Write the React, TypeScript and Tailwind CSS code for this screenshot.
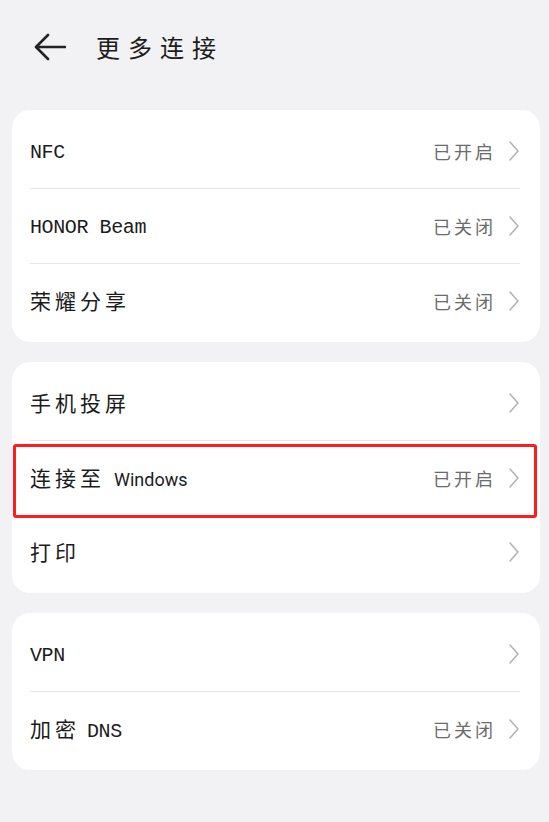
import React from 'react';

const mono = '"Liberation Mono", "Noto Sans CJK SC", monospace';

function Chevron() {
  return (
    <svg width="12" height="22" viewBox="0 0 12 22" fill="none" className="shrink-0">
      <path d="M2 2 L10 11 L2 20" stroke="#b4b4b4" strokeWidth="1.6" strokeLinecap="round" strokeLinejoin="round" />
    </svg>
  );
}

// Chinese runs get extra spacing, latin runs keep tight monospace
function Zh({ children }: { children: React.ReactNode }) {
  return <span className="text-[21px] tracking-[4px]">{children}</span>;
}

type Item = { label: React.ReactNode; status?: string; highlight?: boolean };

function Row({ item, divider }: { item: Item; divider: boolean }) {
  return (
    <div className="relative">
      <div className="flex h-[74px] items-center justify-between pl-[18px] pr-[20px]">
        <span className="pt-[4px] text-[20px] leading-none tracking-[-0.4px] text-[#1c1c1c]" style={{ fontFamily: mono }}>
          {item.label}
        </span>
        <div className="flex items-center gap-[12px]">
          {item.status && (
            <span className="text-[18px] leading-none tracking-[3px] text-[#6b6b6b]" style={{ fontFamily: '"Noto Sans CJK SC", sans-serif' }}>
              {item.status}
            </span>
          )}
          <Chevron />
        </div>
      </div>
      {divider && <div className="ml-[18px] mr-[20px] h-px bg-[#e6e6e6]" />}
      {item.highlight && (
        <div className="pointer-events-none absolute left-[1px] right-[3px] top-[3px] -bottom-[3px] rounded-[3px] border-[3px] border-[#ff1c1c]" />
      )}
    </div>
  );
}

function Card({ items }: { items: Item[] }) {
  return (
    <div className="ml-3 w-[528px] rounded-[18px] bg-white py-1">
      {items.map((it, i) => (
        <Row key={i} item={it} divider={i < items.length - 1 && !it.highlight} />
      ))}
    </div>
  );
}

export default function App() {
  const groups: Item[][] = [
    [
      { label: 'NFC', status: '已开启' },
      { label: 'HONOR Beam', status: '已关闭' },
      { label: <Zh>荣耀分享</Zh>, status: '已关闭' },
    ],
    [
      { label: <Zh>手机投屏</Zh> },
      {
        label: (
          <>
            <Zh>连接至</Zh>
            <span className="ml-[9px] text-[18px] tracking-normal" style={{ fontFamily: 'Roboto, "Liberation Sans", sans-serif' }}>
              Windows
            </span>
          </>
        ),
        status: '已开启',
        highlight: true,
      },
      { label: <Zh>打印</Zh> },
    ],
    [
      { label: 'VPN' },
      {
        label: (
          <>
            <Zh>加密</Zh>
            <span className="ml-[7px]">DNS</span>
          </>
        ),
        status: '已关闭',
      },
    ],
  ];

  return (
    <div className="min-h-[822px] w-[549px] bg-[#f2f2f4]">
      <header className="flex h-[96px] items-center pl-[34px] pb-[2px]">
        <svg width="32" height="30" viewBox="0 0 32 30" fill="none">
          <path d="M3 15 H31 M14 3 L2 15 L14 27" stroke="#222" strokeWidth="2.6" strokeLinecap="round" strokeLinejoin="round" />
        </svg>
        <h1
          className="ml-[30px] text-[24px] tracking-[8px] text-[#1c1c1c]"
          style={{ fontFamily: '"Noto Sans CJK SC", sans-serif' }}
        >
          更多连接
        </h1>
      </header>
      <div className="mt-[14px] flex flex-col gap-5">
        {groups.map((g, i) => (
          <Card key={i} items={g} />
        ))}
      </div>
    </div>
  );
}
